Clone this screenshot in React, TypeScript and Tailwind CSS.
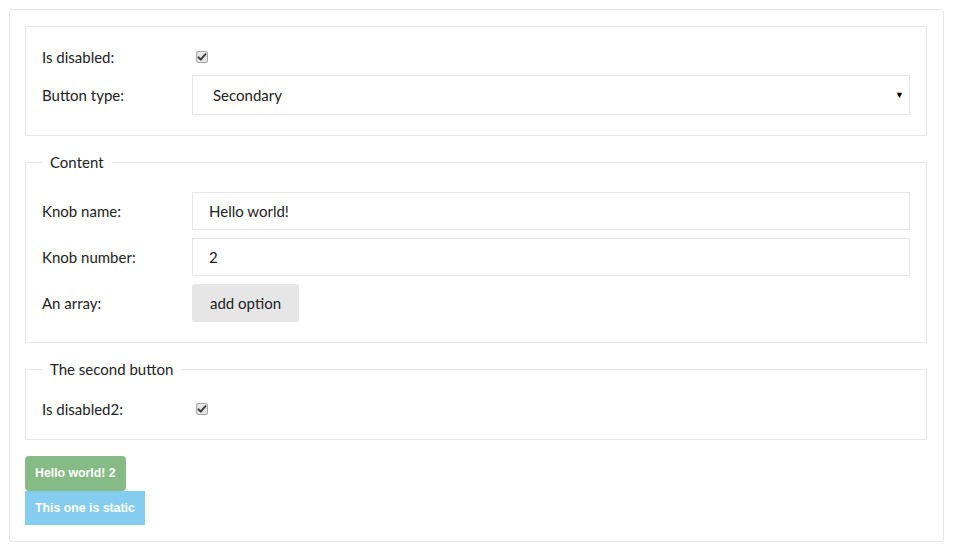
import { useState } from 'react';

const font = "font-['Lato','Noto_Sans',sans-serif]";

function Row({ label, children }: { label: string; children: React.ReactNode }) {
  return (
    <div className="flex items-center">
      <label className="w-[150px] shrink-0 text-[15px] leading-5 text-[#222]">{label}</label>
      <div className="flex-1 flex items-center">{children}</div>
    </div>
  );
}

// old-style greyed checkbox, drawn so the tick matches
function Check({ checked }: { checked: boolean }) {
  return (
    <span className="relative ml-1 w-[12px] h-[12px] inline-block">
      <input
        type="checkbox"
        checked={checked}
        disabled
        readOnly
        className="appearance-none block w-[12px] h-[12px] m-0 border border-[#a9a9a9] rounded-[2px] bg-[#e4e4e4]"
      />
      {checked && (
        <svg className="absolute inset-0 w-[12px] h-[12px] pointer-events-none" viewBox="0 0 12 12">
          <path d="M2.5 6.3l2.2 2.3 4.8-5.4" fill="none" stroke="#3a3a3a" strokeWidth={1.9} strokeLinecap="round" strokeLinejoin="round" />
        </svg>
      )}
    </span>
  );
}

export default function App() {
  const [name, setName] = useState('Hello world!');
  const [num, setNum] = useState('2');
  const [type, setType] = useState('Secondary');

  return (
    <div className={`${font} bg-white pl-[9px] pr-[10px] pt-[9px] pb-[8px]`}>
      <div className="border border-[#e6e6e6] rounded-[3px] pl-[15px] pr-[16px] pt-[16px] pb-[16px] flex flex-col">
        {/* Base knobs */}
        <fieldset className="border border-[#e6e6e6] px-4 pt-5 pb-5 flex flex-col gap-2">
          <Row label="Is disabled:">
            <Check checked />
          </Row>
          <Row label="Button type:">
            <div className="relative w-full">
              <select
                value={type}
                onChange={e => setType(e.target.value)}
                className="appearance-none w-full h-10 border border-[#e6e6e6] bg-white pl-5 text-[15px] text-[#222] outline-none"
              >
                <option>Primary</option>
                <option>Secondary</option>
              </select>
              <span className="absolute right-[6px] top-1/2 -translate-y-1/2 text-[9px] text-black pointer-events-none">▼</span>
            </div>
          </Row>
        </fieldset>

        {/* Content */}
        <fieldset className="mt-4 border border-[#e6e6e6] px-4 pt-5 pb-5">
          <legend className="px-2 text-[15px] leading-5 text-[#222]">Content</legend>
          <div className="flex flex-col gap-2">
            <Row label="Knob name:">
              <input
                value={name}
                onChange={e => setName(e.target.value)}
                className="w-full h-[38px] border border-[#e6e6e6] px-4 text-[15px] text-[#222] outline-none"
              />
            </Row>
            <Row label="Knob number:">
              <input
                value={num}
                onChange={e => setNum(e.target.value)}
                className="w-full h-[38px] border border-[#e6e6e6] px-4 text-[15px] text-[#222] outline-none"
              />
            </Row>
            <Row label="An array:">
              <button className="h-[38px] px-[18px] bg-[#e6e6e6] rounded-[3px] text-[15px] text-[#222]">
                add option
              </button>
            </Row>
          </div>
        </fieldset>

        {/* Second button */}
        <fieldset className="mt-4 border border-[#e6e6e6] px-4 pt-5 pb-5">
          <legend className="px-2 text-[15px] leading-5 text-[#222]">The second button</legend>
          <Row label="Is disabled2:">
            <Check checked />
          </Row>
        </fieldset>

        <div className="mt-4 flex flex-col items-start font-['Liberation_Sans',Arial,sans-serif]">
          <button className="h-[35px] px-[10px] bg-[#86bb86] rounded-[4px] text-white text-[12.3px] font-bold">
            Hello world! 2
          </button>
          <button className="h-[34px] px-[10px] bg-[#84cdee] text-white text-[12.3px] font-bold">
            This one is static
          </button>
        </div>
      </div>
    </div>
  );
}
